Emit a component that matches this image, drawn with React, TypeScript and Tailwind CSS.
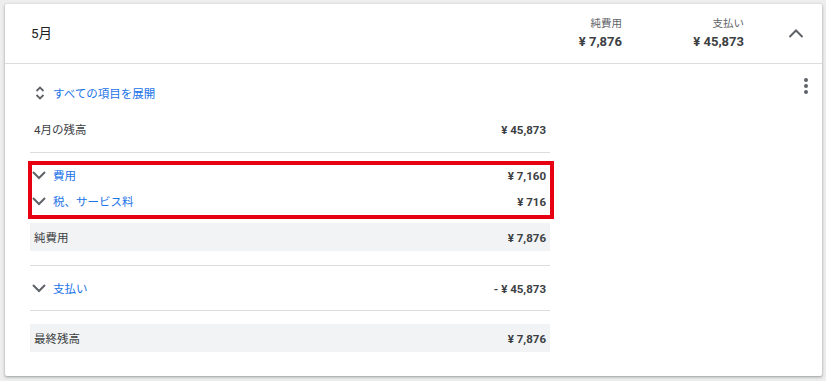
import React from "react";

const FONT = { fontFamily: 'Roboto, "Noto Sans CJK JP", sans-serif' };

function ChevronDown() {
  return (
    <svg width="14" height="14" viewBox="0 0 14 14" className="shrink-0">
      <polyline points="1,4 7,10 13,4" fill="none" stroke="#5f6368" strokeWidth="2" />
    </svg>
  );
}

function ChevronUp() {
  return (
    <svg width="16" height="16" viewBox="0 0 16 16">
      <polyline points="1.5,11 8,4.5 14.5,11" fill="none" stroke="#5f6368" strokeWidth="2" />
    </svg>
  );
}

function UnfoldMore() {
  return (
    <svg width="10" height="14" viewBox="0 0 10 14" className="shrink-0">
      <polyline points="1.5,5 5,1.5 8.5,5" fill="none" stroke="#5f6368" strokeWidth="1.8" />
      <polyline points="1.5,9 5,12.5 8.5,9" fill="none" stroke="#5f6368" strokeWidth="1.8" />
    </svg>
  );
}

function Kebab() {
  return (
    <svg width="24" height="24" viewBox="0 0 24 24">
      <circle cx="12" cy="6" r="2" fill="#5f6368" />
      <circle cx="12" cy="12" r="2" fill="#5f6368" />
      <circle cx="12" cy="18" r="2" fill="#5f6368" />
    </svg>
  );
}

function ExpandRow({ label, amount, className }: { label: string; amount: string; className: string }) {
  return (
    <div className={"flex items-center pr-[4px] " + className}>
      <ChevronDown />
      <span className="ml-[7px] pt-[3px] text-[11.5px] text-[#1a73e8]">{label}</span>
      <span className="ml-auto pt-[3px] text-[11.5px] font-bold text-[#3c4043]">{amount}</span>
    </div>
  );
}

function PlainRow({ label, amount, className }: { label: string; amount: string; className: string }) {
  return (
    <div className={"flex items-center px-[4px] pt-[3px] text-[11.5px] text-[#3c4043] " + className}>
      <span>{label}</span>
      <span className="ml-auto font-bold">{amount}</span>
    </div>
  );
}

export default function App() {
  return (
    <div className="min-h-[381px] bg-[#eeeeee] pt-[4px] pl-[5px] pr-[4px] pb-[5px]" style={FONT}>
      <div className="bg-white rounded-[2px] shadow-[0_1px_2px_rgba(60,64,67,0.3),0_1px_3px_1px_rgba(60,64,67,0.15)] pb-[24px]">
        <div className="h-[60px] flex items-center border-b border-[#dadce0] pl-[26px] pr-[14px]">
          <p className="flex-1 text-[13.5px] text-[#202124]">5月</p>
          <div className="w-[100px] text-right">
            <p className="text-[10.5px] leading-[16px] text-[#5f6368]">純費用</p>
            <p className="text-[13px] leading-[20px] font-bold text-[#3c4043]">¥ 7,876</p>
          </div>
          <div className="w-[100px] ml-[22px] text-right">
            <p className="text-[10.5px] leading-[16px] text-[#5f6368]">支払い</p>
            <p className="text-[13px] leading-[20px] font-bold text-[#3c4043]">¥ 45,873</p>
          </div>
          <div className="w-[24px] h-[24px] ml-[40px] flex items-center justify-center">
            <ChevronUp />
          </div>
        </div>

        <div className="flex">
          <div className="w-[520px] ml-[25px] flex flex-col">
            <div className="mt-[15px] h-[28px] flex items-center pl-[5px]">
              <UnfoldMore />
              <span className="ml-[8px] pt-[3px] text-[11.5px] text-[#1a73e8]">すべての項目を展開</span>
            </div>
            <PlainRow label="4月の残高" amount="¥ 45,873" className="h-[46px] border-b border-[#dadce0]" />

            <div className="mt-[8px] -ml-[2px] -mr-[4px] border-4 border-[#e60012] pb-[4px] flex flex-col gap-[6px]">
              <ExpandRow label="費用" amount="¥ 7,160" className="h-[20px]" />
              <ExpandRow label="税、サービス料" amount="¥ 716" className="h-[20px]" />
            </div>

            <PlainRow label="純費用" amount="¥ 7,876" className="mt-[4px] h-[28px] bg-[#f1f3f4]" />

            <ExpandRow
              label="支払い"
              amount="- ¥ 45,873"
              className="mt-[14px] h-[46px] pl-[2px] border-y border-[#dadce0]"
            />

            <PlainRow label="最終残高" amount="¥ 7,876" className="mt-[13px] h-[28px] bg-[#f1f3f4]" />
          </div>
          <div className="ml-auto mt-[10px] mr-[4px]">
            <Kebab />
          </div>
        </div>
      </div>
    </div>
  );
}
